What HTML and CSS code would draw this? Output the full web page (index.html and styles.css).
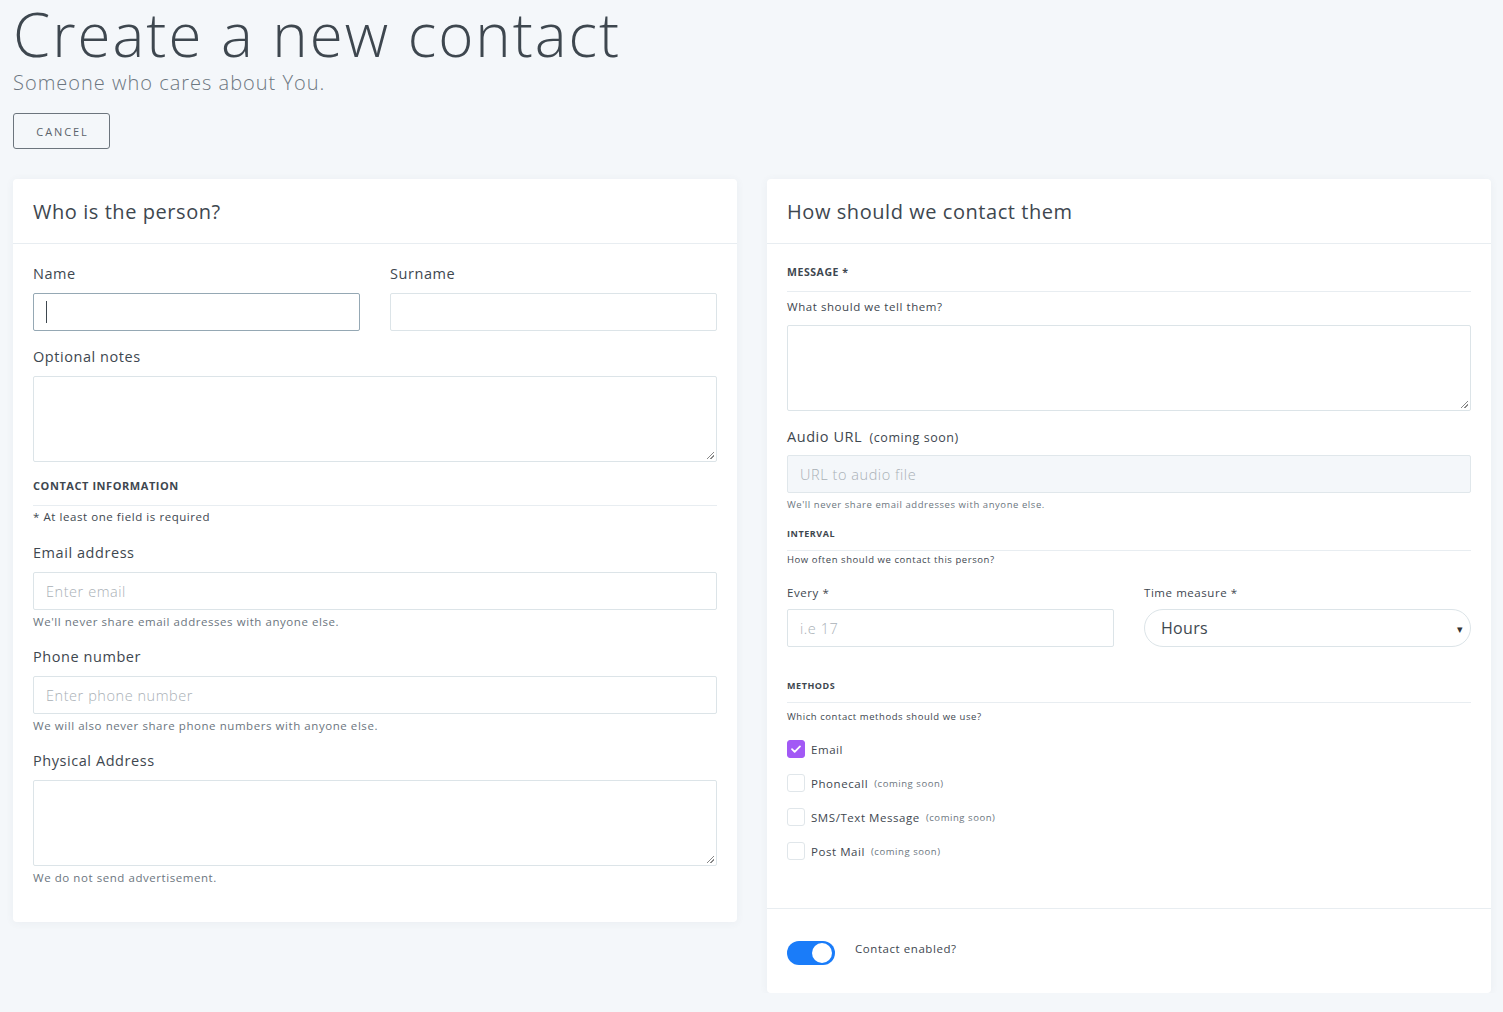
FILE: index.html
```html
<!DOCTYPE html>
<html lang="en">
<head>
<meta charset="utf-8">
<title>Create a new contact</title>
<link rel="stylesheet" href="styles.css">
</head>
<body>
<header class="page-head">
  <h1 class="title">Create a new contact</h1>
  <p class="subtitle">Someone who cares about You.</p>
  <button class="btn-cancel" type="button">CANCEL</button>
</header>

<main class="cards">
  <section class="card card-left">
    <div class="card-head"><h2>Who is the person?</h2></div>
    <div class="card-body">
      <div class="row-2">
        <div class="field">
          <label class="lbl">Name</label>
          <div class="input focused"><span class="caret"></span></div>
        </div>
        <div class="field">
          <label class="lbl">Surname</label>
          <div class="input"></div>
        </div>
      </div>
      <div class="field notes">
        <label class="lbl">Optional notes</label>
        <div class="textarea"><span class="grip"></span></div>
      </div>
      <h3 class="section-title">CONTACT INFORMATION</h3>
      <p class="note">* At least one field is required</p>
      <div class="field mt-email">
        <label class="lbl">Email address</label>
        <div class="input"><span class="ph">Enter email</span></div>
        <p class="help">We'll never share email addresses with anyone else.</p>
      </div>
      <div class="field mt-phone">
        <label class="lbl">Phone number</label>
        <div class="input"><span class="ph">Enter phone number</span></div>
        <p class="help">We will also never share phone numbers with anyone else.</p>
      </div>
      <div class="field mt-addr">
        <label class="lbl">Physical Address</label>
        <div class="textarea"><span class="grip"></span></div>
        <p class="help">We do not send advertisement.</p>
      </div>
    </div>
  </section>

  <section class="card card-right">
    <div class="card-head"><h2>How should we contact them</h2></div>
    <div class="card-body rbody">
      <h3 class="section-title sm1">MESSAGE *</h3>
      <p class="note n2">What should we tell them?</p>
      <div class="textarea"><span class="grip"></span></div>
      <div class="field audio">
        <label class="lbl">Audio URL <span class="soon">(coming soon)</span></label>
        <div class="input disabled"><span class="ph">URL to audio file</span></div>
        <p class="help tiny">We'll never share email addresses with anyone else.</p>
      </div>
      <h3 class="section-title xs">INTERVAL</h3>
      <p class="note tiny">How often should we contact this person?</p>
      <div class="row-2 interval">
        <div class="field">
          <label class="lbl small">Every *</label>
          <div class="input"><span class="ph">i.e 17</span></div>
        </div>
        <div class="field">
          <label class="lbl small">Time measure *</label>
          <div class="select"><span class="sel-val">Hours</span><span class="arrow">▾</span></div>
        </div>
      </div>
      <h3 class="section-title xs methods">METHODS</h3>
      <p class="note tiny mnote">Which contact methods should we use?</p>
      <ul class="checks">
        <li><span class="box checked"><svg viewBox="0 0 18 18" width="18" height="18"><path d="M4.5 9.2l3 3 6-6.2" fill="none" stroke="#fff" stroke-width="2" stroke-linecap="round" stroke-linejoin="round"/></svg></span><span class="clabel">Email</span></li>
        <li><span class="box"></span><span class="clabel">Phonecall</span><span class="soon2">(coming soon)</span></li>
        <li><span class="box"></span><span class="clabel">SMS/Text Message</span><span class="soon2">(coming soon)</span></li>
        <li><span class="box"></span><span class="clabel">Post Mail</span><span class="soon2">(coming soon)</span></li>
      </ul>
    </div>
    <div class="card-foot">
      <span class="toggle"><span class="knob"></span></span>
      <span class="toggle-lbl">Contact enabled?</span>
    </div>
  </section>
</main>
</body>
</html>
```

FILE: styles.css
```css
* { box-sizing: border-box; }
html, body { margin: 0; padding: 0; }
body {
  background: #f4f7fa;
  font-family: "Open Sans", "Noto Sans", "Liberation Sans", sans-serif;
  color: #3e474f;
  letter-spacing: 0.035em;
  padding: 0 12px 0 13px;
}
.page-head { padding-top: 1px; }
.title {
  margin: 0;
  font-weight: 300;
  font-size: 60px;
  line-height: 66px;
  color: #3e474f;
  letter-spacing: 2px;
}
.subtitle {
  margin: 4px 0 0 0;
  font-size: 20px;
  font-weight: 300;
  line-height: 24px;
  letter-spacing: 1px;
  color: #6c7680;
}
.btn-cancel {
  margin-top: 18px;
  width: 97px;
  height: 36px;
  background: transparent;
  border: 1px solid #6c757d;
  border-radius: 3px;
  font-family: inherit;
  font-size: 11px;
  letter-spacing: 1.9px;
  color: #5b636b;
  padding: 0 0 0 2px;
}
.cards {
  display: flex;
  gap: 30px;
  align-items: flex-start;
  margin-top: 30px;
}
.card {
  flex: 1;
  background: #fff;
  border-radius: 4px;
  box-shadow: 0 1px 8px rgba(60, 80, 110, 0.06);
}
.card-head {
  height: 65px;
  border-bottom: 1px solid #e8edf1;
  padding: 0 20px;
  display: flex;
  align-items: center;
}
.card-head h2 {
  margin: 0;
  font-size: 20px;
  font-weight: 400;
  color: #3e474f;
}
.card-body { padding: 20px 20px 36px; }
.row-2 {
  display: grid;
  grid-template-columns: 1fr 1fr;
  gap: 30px;
}
.field { display: flex; flex-direction: column; }
.lbl {
  font-size: 14.5px;
  line-height: 20px;
  color: #3e474f;
  margin-bottom: 9px;
}
.input {
  height: 38px;
  border: 1px solid #dce4e8;
  border-radius: 2px;
  background: #fff;
  display: flex;
  align-items: center;
  padding: 0 12px;
}
.input.focused { border-color: #95a8b4; }
.caret {
  display: block;
  width: 1px;
  height: 22px;
  background: #3e474f;
}
.ph {
  font-size: 14.5px;
  color: #a9b0b6;
  font-weight: 300;
}
.input.disabled { background: #f4f7fa; border-color: #e0e7eb; }
.textarea {
  height: 86px;
  border: 1px solid #dce4e8;
  border-radius: 2px;
  position: relative;
  background: #fff;
}
.grip {
  position: absolute;
  right: 2px;
  bottom: 2px;
  width: 7px;
  height: 7px;
  background: linear-gradient(135deg, transparent 45%, #888 45%, #888 55%, transparent 55%, transparent 70%, #888 70%, #888 80%, transparent 80%);
}
.notes { margin-top: 16px; }
.section-title {
  margin: 16px 0 0;
  font-size: 11px;
  font-weight: 700;
  color: #3e474f;
  line-height: 16px;
  padding-bottom: 11px;
  border-bottom: 1px solid #e8edf1;
}
.note {
  margin: 3px 0 0;
  font-size: 11.5px;
  line-height: 16px;
  color: #3e474f;
}
.mt-email { margin-top: 18px; }
.mt-phone { margin-top: 17px; }
.mt-addr { margin-top: 17px; }
.help {
  margin: 4px 0 0;
  font-size: 11.5px;
  line-height: 16px;
  color: #6c7680;
}

/* right card */
.rbody { padding-top: 20px; padding-bottom: 40px; }
.section-title.sm1 { margin-top: 0; font-size: 10.5px; padding-bottom: 11px; }
.note.n2 { margin: 7px 0 10px; font-size: 11.5px; }
.audio { margin-top: 16px; }
.audio .lbl { margin-bottom: 7px; }
.soon { font-size: 12.5px; margin-left: 3px; }
.help.tiny, .note.tiny { font-size: 9.5px; color: #3e474f; }
.help.tiny { color: #6c7680; margin-top: 4px; }
.section-title.xs { font-size: 9px; margin-top: 13px; padding-bottom: 8px; }
.note.tiny { margin-top: 1px; }
.interval { margin-top: 15px; }
.lbl.small { font-size: 11.5px; margin-bottom: 6px; }
.select {
  height: 38px;
  border: 1px solid #dce4e8;
  border-radius: 19px;
  display: flex;
  align-items: center;
  justify-content: space-between;
  padding: 0 6px 0 16px;
  background: #fff;
}
.sel-val { font-size: 16px; color: #3e474f; letter-spacing: 0.02em; }
.arrow { font-size: 11px; color: #333; }
.section-title.methods { margin-top: 31px; }
.note.mnote { margin-top: 6px; }
.checks { list-style: none; margin: 7px 0 0; padding: 0; }
.checks li {
  display: flex;
  align-items: center;
  height: 34px;
}
.box {
  width: 18px;
  height: 18px;
  border: 1px solid #e0e6ea;
  border-radius: 3px;
  margin-right: 6px;
  display: flex;
  align-items: center;
  justify-content: center;
  flex: none;
}
.box.checked { background: #a259f5; border-color: #a259f5; }
.clabel { font-size: 11.5px; color: #3e474f; }
.soon2 { font-size: 9.5px; color: #6c7680; margin-left: 6px; }
.card-foot {
  border-top: 1px solid #e8edf1;
  height: 85px;
  padding: 3px 20px 0;
  display: flex;
  align-items: center;
}
.toggle {
  width: 48px;
  height: 24px;
  border-radius: 12px;
  background: #1a7cf9;
  position: relative;
  display: inline-block;
  margin-right: 20px;
}
.knob {
  position: absolute;
  right: 3px;
  top: 2px;
  width: 20px;
  height: 20px;
  border-radius: 50%;
  background: #fff;
}
.toggle-lbl { font-size: 11.5px; color: #3e474f; position: relative; top: -4px; }
```
